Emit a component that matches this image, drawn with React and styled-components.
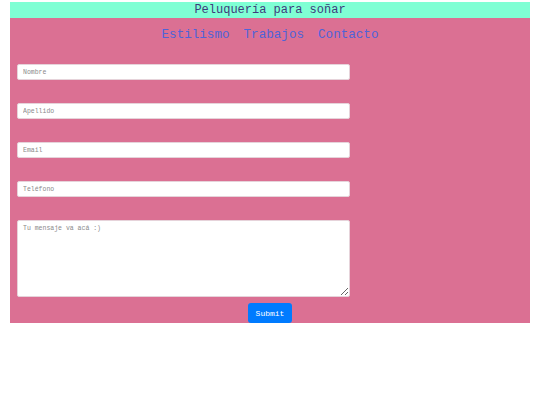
import React from "react";
import styled, { createGlobalStyle } from "styled-components";

const Global = createGlobalStyle`
  html, body { margin: 0; padding: 0; background: #ffffff; }
  body { font-family: "Liberation Mono", "DejaVu Sans Mono", monospace; }
  * { box-sizing: border-box; }
`;

const Page = styled.div`
  margin: 2px 10px 0;
`;

const Header = styled.header`
  background: #7fffd4;
  height: 16px;
  line-height: 16px;
  text-align: center;
  font-size: 12px;
  color: #3d3d7c;
`;

const Main = styled.main`
  background: #db7093;
  height: 305px;
  display: flex;
  flex-direction: column;
`;

const Nav = styled.nav`
  display: flex;
  justify-content: center;
  gap: 14px;
  padding-top: 9px;
  height: 25px;
  line-height: 16px;
  font-size: 12.6px;
`;

const NavLink = styled.a`
  color: #4f63d8;
  text-decoration: none;
`;

const Form = styled.form`
  display: flex;
  flex-direction: column;
  padding: 21px 7px 0;
`;

const Field = styled.input`
  width: 333px;
  height: 16px;
  margin: 0 0 23px;
  padding: 0 5px;
  border: 1px solid #e6d3da;
  border-radius: 2px;
  background: #ffffff;
  font-family: "Liberation Mono", monospace;
  font-size: 6.5px;
  outline: none;
  &::placeholder { color: #8a8a8a; }
`;

const Message = styled.textarea`
  width: 333px;
  height: 77px;
  margin: 0;
  padding: 4px 5px;
  border: 1px solid #e6d3da;
  border-radius: 2px;
  background: #ffffff;
  font-family: "Liberation Mono", monospace;
  font-size: 6.5px;
  outline: none;
  &::placeholder { color: #8a8a8a; }
`;

const Submit = styled.button`
  align-self: center;
  margin: 6px 0 0;
  height: 20px;
  width: 44px;
  padding: 0;
  border: none;
  border-radius: 3px;
  background: #007bff;
  color: #ffffff;
  font-family: "Liberation Mono", monospace;
  font-weight: normal;
  font-size: 8px;
`;

export default function App() {
  return (
    <>
      <Global />
      <Page>
        <Header>Peluquería para soñar</Header>
        <Main>
          <Nav>
            <NavLink href="#">Estilismo</NavLink>
            <NavLink href="#">Trabajos</NavLink>
            <NavLink href="#">Contacto</NavLink>
          </Nav>
          <Form onSubmit={(e) => e.preventDefault()}>
            <Field placeholder="Nombre" />
            <Field placeholder="Apellido" />
            <Field placeholder="Email" />
            <Field placeholder="Teléfono" />
            <Message placeholder="Tu mensaje va acá :)" />
            <Submit type="submit">Submit</Submit>
          </Form>
        </Main>
      </Page>
    </>
  );
}
